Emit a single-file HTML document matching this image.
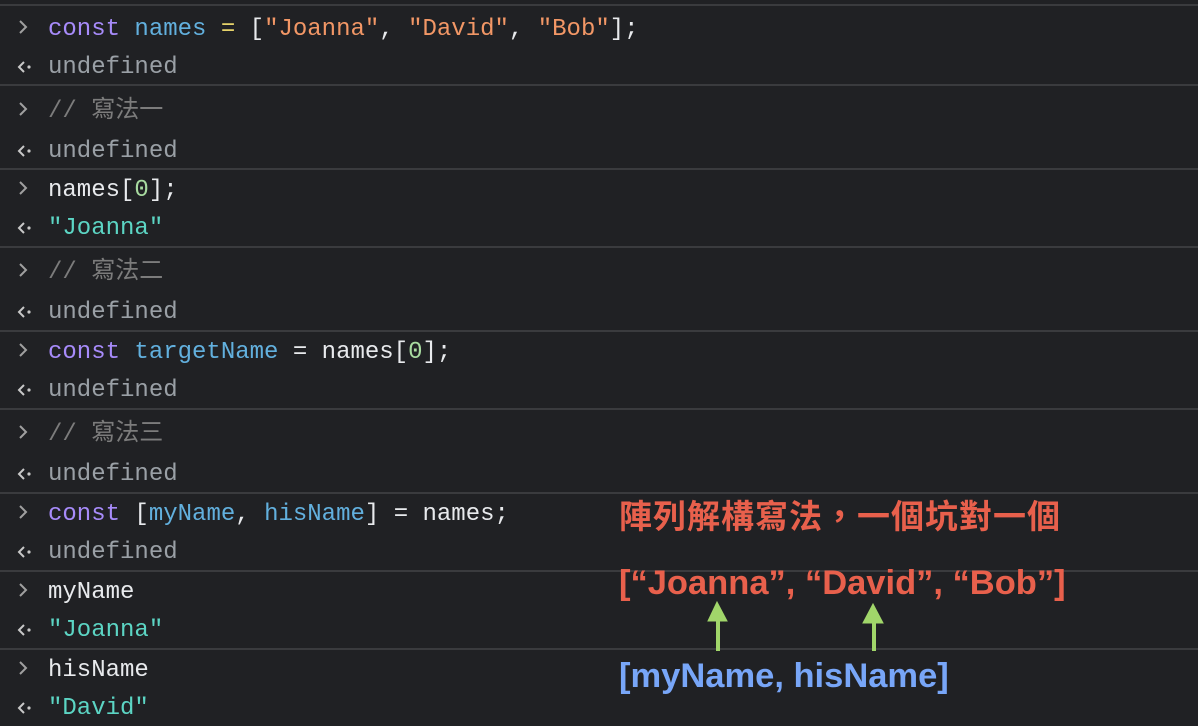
<html><head><style>
body{margin:0;width:1198px;height:726px;background:#202124;overflow:hidden;position:relative;font-family:"Liberation Mono","Noto Sans CJK TC",monospace;font-size:24px;color:#e8eaed}
.l{position:absolute;left:48px;line-height:30px;white-space:pre;margin-top:2px}
.p{position:absolute;left:16px;margin-top:2px}
.h{position:absolute;left:0;width:1198px;height:2px;background:#3a3b3e}
.k{color:#a78bfa}.v{color:#62b0de}.s{color:#f29766}.u{color:#9aa0a6}.r{color:#5cd5c4}.n{color:#a8dba0}.c{color:#7c7c7c}.y{color:#e6d36a}
.a{position:absolute;left:619px;font-family:"Liberation Sans","Noto Sans CJK TC",sans-serif;font-weight:bold;white-space:nowrap;line-height:40px}
</style></head><body>
<svg width="0" height="0" style="position:absolute"><defs>
<symbol id="gt" viewBox="0 0 16 30"><path d="M4 9 L10 15 L4 21" fill="none" stroke="#a0a0a0" stroke-width="2"/></symbol>
<symbol id="lt" viewBox="0 0 16 30"><path d="M8 10 L3 15 L8 20" fill="none" stroke="#c8c8c8" stroke-width="2"/><circle cx="13" cy="15" r="1.6" fill="#c8c8c8"/></symbol>
</defs></svg>
<div class="h" style="top:4px"></div><div class="h" style="top:84px"></div><div class="h" style="top:168px"></div><div class="h" style="top:246px"></div><div class="h" style="top:330px"></div><div class="h" style="top:408px"></div><div class="h" style="top:492px"></div><div class="h" style="top:570px"></div><div class="h" style="top:648px"></div>

<svg class="p" style="top:10px" width="16" height="30"><use href="#gt"/></svg><div class="l" style="top:13px"><span class="k">const</span> <span class="v">names</span> <span class="y">=</span> [<span class="s">"Joanna"</span>, <span class="s">"David"</span>, <span class="s">"Bob"</span>];</div>
<svg class="p" style="top:50px" width="16" height="30"><use href="#lt"/></svg><div class="l u" style="top:51px">undefined</div>
<svg class="p" style="top:92px" width="16" height="30"><use href="#gt"/></svg><div class="l c" style="top:95px">// 寫法一</div>
<svg class="p" style="top:134px" width="16" height="30"><use href="#lt"/></svg><div class="l u" style="top:135px">undefined</div>
<svg class="p" style="top:171px" width="16" height="30"><use href="#gt"/></svg><div class="l" style="top:174px">names[<span class="n">0</span>];</div>
<svg class="p" style="top:211px" width="16" height="30"><use href="#lt"/></svg><div class="l r" style="top:212px">"Joanna"</div>
<svg class="p" style="top:253px" width="16" height="30"><use href="#gt"/></svg><div class="l c" style="top:256px">// 寫法二</div>
<svg class="p" style="top:295px" width="16" height="30"><use href="#lt"/></svg><div class="l u" style="top:296px">undefined</div>
<svg class="p" style="top:333px" width="16" height="30"><use href="#gt"/></svg><div class="l" style="top:336px"><span class="k">const</span> <span class="v">targetName</span> = names[<span class="n">0</span>];</div>
<svg class="p" style="top:373px" width="16" height="30"><use href="#lt"/></svg><div class="l u" style="top:374px">undefined</div>
<svg class="p" style="top:415px" width="16" height="30"><use href="#gt"/></svg><div class="l c" style="top:418px">// 寫法三</div>
<svg class="p" style="top:457px" width="16" height="30"><use href="#lt"/></svg><div class="l u" style="top:458px">undefined</div>
<svg class="p" style="top:495px" width="16" height="30"><use href="#gt"/></svg><div class="l" style="top:498px"><span class="k">const</span> [<span class="v">myName</span>, <span class="v">hisName</span>] = names;</div>
<svg class="p" style="top:535px" width="16" height="30"><use href="#lt"/></svg><div class="l u" style="top:536px">undefined</div>
<svg class="p" style="top:573px" width="16" height="30"><use href="#gt"/></svg><div class="l" style="top:576px">myName</div>
<svg class="p" style="top:613px" width="16" height="30"><use href="#lt"/></svg><div class="l r" style="top:614px">"Joanna"</div>
<svg class="p" style="top:651px" width="16" height="30"><use href="#gt"/></svg><div class="l" style="top:654px">hisName</div>
<svg class="p" style="top:691px" width="16" height="30"><use href="#lt"/></svg><div class="l r" style="top:692px">"David"</div>

<div class="a" style="top:497px;color:#e8604c;font-size:33px;letter-spacing:1px">陣列解構寫法，一個坑對一個</div>
<div class="a" style="top:563px;color:#e8604c;font-size:34.5px">[“Joanna”, “David”, “Bob”]</div>
<div class="a" style="top:656px;color:#78a6f8;font-size:34.5px">[myName, hisName]</div>
<svg style="position:absolute;left:0;top:0" width="1198" height="726">
<g fill="#a1d66a" stroke="#a1d66a" stroke-width="4"><line x1="718" y1="615" x2="718" y2="651"/><polygon points="708,621 717,602 727,621" stroke-width="1"/>
<line x1="874" y1="617" x2="874" y2="651"/><polygon points="863,623 873,604 883,623" stroke-width="1"/></g>
</svg>
</body></html>
